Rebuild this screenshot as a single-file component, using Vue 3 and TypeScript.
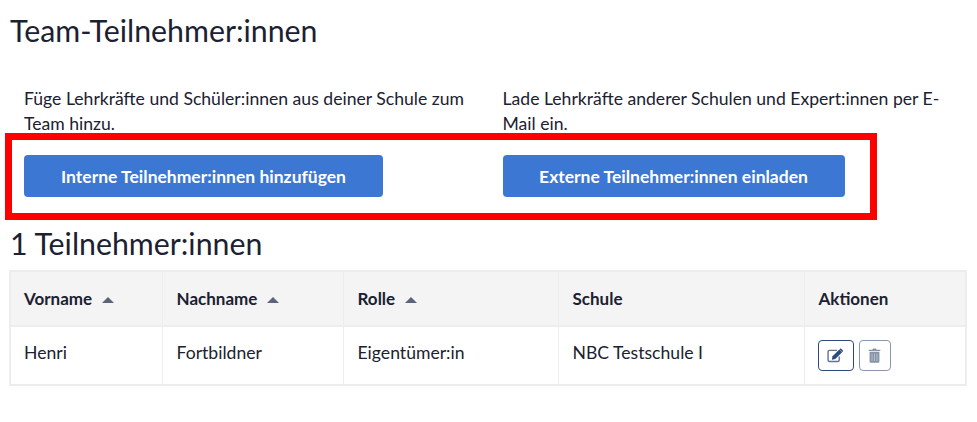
<template>
  <div class="page">
    <h1 class="title">Team-Teilnehmer:innen</h1>

    <div class="invite-row">
      <div class="invite-col">
        <p>Füge Lehrkräfte und Schüler:innen aus deiner Schule zum Team hinzu.</p>
        <button class="btn-primary btn-internal">Interne Teilnehmer:innen hinzufügen</button>
      </div>
      <div class="invite-col">
        <p>Lade Lehrkräfte anderer Schulen und Expert:innen per E-Mail ein.</p>
        <button class="btn-primary btn-external">Externe Teilnehmer:innen einladen</button>
      </div>
      <!-- rote Markierung -->
      <div class="highlight"></div>
    </div>

    <h2 class="count">{{ members.length }} Teilnehmer:innen</h2>

    <table class="members">
      <colgroup>
        <col v-for="w in colWidths" :key="w" :style="{ width: w + 'px' }" />
      </colgroup>
      <thead>
        <tr>
          <th v-for="c in columns" :key="c.label">
            {{ c.label }}<span v-if="c.sortable" class="sort"></span>
          </th>
        </tr>
      </thead>
      <tbody>
        <tr v-for="m in members" :key="m.lastName">
          <td>{{ m.firstName }}</td>
          <td>{{ m.lastName }}</td>
          <td>{{ m.role }}</td>
          <td>{{ m.school }}</td>
          <td class="action-cell">
            <div class="actions">
              <button class="icon-btn edit" aria-label="Bearbeiten">
                <svg width="17" height="15" viewBox="0 0 16 14">
                  <path d="M11.5 8v3.2c0 .9-.6 1.4-1.4 1.4H2.4c-.9 0-1.4-.6-1.4-1.4V3.6c0-.9.6-1.4 1.4-1.4h7" fill="none" stroke="#5f7394" stroke-width="1.3" />
                  <path d="M5.2 7.8 11.6 1.4l2.6 2.6-6.4 6.4-3.2.7z" fill="#2c4a7c" />
                  <path d="M12.4.7c.3-.3.7-.3 1 0l1.5 1.5c.3.3.3.7 0 1l-.6.6-2.5-2.5z" fill="#2c4a7c" />
                </svg>
              </button>
              <button class="icon-btn delete" aria-label="Löschen">
                <svg width="13" height="15" viewBox="0 0 12 14">
                  <path d="M4 1.6 4.6.5h2.8L8 1.6h3.4v1.3H.6V1.6z" fill="#8793a9" />
                  <path d="M1.4 3.6h9.2v9c0 .7-.5 1.2-1.2 1.2H2.6c-.7 0-1.2-.5-1.2-1.2z" fill="#8793a9" />
                  <path d="M3.7 5.2v7M6 5.2v7M8.3 5.2v7" stroke="#fff" stroke-width=".8" opacity=".45" />
                </svg>
              </button>
            </div>
          </td>
        </tr>
      </tbody>
    </table>
  </div>
</template>

<script setup lang="ts">
interface Member {
  firstName: string
  lastName: string
  role: string
  school: string
}

const colWidths = [152, 181, 215, 246, 162]

const columns = [
  { label: 'Vorname', sortable: true },
  { label: 'Nachname', sortable: true },
  { label: 'Rolle', sortable: true },
  { label: 'Schule', sortable: false },
  { label: 'Aktionen', sortable: false }
]

const members: Member[] = [
  { firstName: 'Henri', lastName: 'Fortbildner', role: 'Eigentümer:in', school: 'NBC Testschule I' }
]
</script>

<style>
body {
  background: #fff;
}
</style>

<style scoped>
.page {
  width: 957px;
  margin-left: 10px;
  font-family: "Lato", "Liberation Sans", sans-serif;
  color: #1b2130;
  font-size: 17.6px;
}

.title {
  margin: 0;
  padding-top: 11px;
  height: 70px;
  box-sizing: border-box;
  font-size: 30.3px;
  line-height: 38px;
  font-weight: 400;
}

.invite-row {
  position: relative;
  display: flex;
  margin-top: 6px;
  height: 140px;
}

.invite-col {
  width: 479px;
  box-sizing: border-box;
  padding: 0 14px;
}

.invite-col p {
  margin: 0;
  line-height: 25px;
  padding-top: 10px;
  height: 79px;
  box-sizing: border-box;
}

.btn-primary {
  display: block;
  height: 42px;
  border: none;
  border-radius: 4px;
  background: #3c77d4;
  color: #fff;
  font-family: inherit;
  font-size: 17.5px;
  font-weight: 700;
}

.btn-internal {
  width: 359px;
}

.btn-external {
  width: 342px;
}

.highlight {
  position: absolute;
  left: -5px;
  top: 57px;
  width: 872px;
  height: 87px;
  box-sizing: border-box;
  border: 7px solid #ff0000;
}

.count {
  margin: 8px 0 0;
  height: 40px;
  font-size: 30.3px;
  line-height: 38px;
  font-weight: 400;
}

.members {
  margin-top: 6px;
  margin-left: -1px;
  width: 957px;
  table-layout: fixed;
  border-collapse: collapse;
  border: 2px solid #ededed;
}

.members th,
.members td {
  border: 1px solid #ededed;
  padding: 0 14px;
  text-align: left;
}

.members th:first-child,
.members td:first-child {
  padding-left: 13px;
}

.members th {
  height: 53px;
  background: #f4f4f4;
  border-bottom-width: 2px;
  font-size: 17px;
  font-weight: 700;
}

.members td {
  box-sizing: border-box;
  height: 59px;
  padding-bottom: 6px;
}

.members td.action-cell {
  padding-bottom: 1px;
  padding-left: 13px;
}

.sort {
  display: inline-block;
  margin-left: 10px;
  vertical-align: 2px;
  border-left: 6px solid transparent;
  border-right: 6px solid transparent;
  border-bottom: 6px solid #5b6478;
}

.actions {
  display: flex;
  gap: 5px;
}

.icon-btn {
  display: flex;
  align-items: center;
  justify-content: center;
  height: 31px;
  padding: 0;
  background: #fff;
  border-radius: 4px;
}

.edit {
  width: 36px;
  border: 1px solid #2c4a7c;
}

.delete {
  width: 32px;
  border: 1px solid #8a97ad;
}
</style>
